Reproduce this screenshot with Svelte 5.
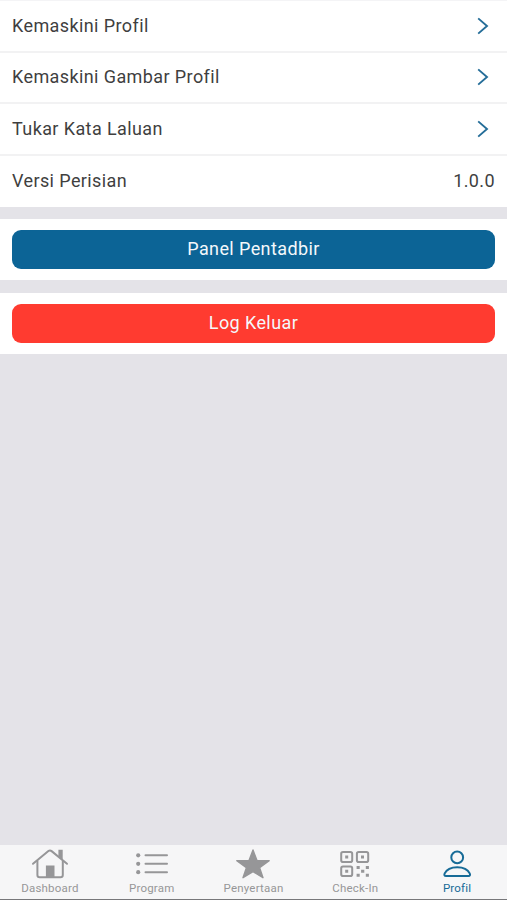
<script lang="ts">
  const links = ['Kemaskini Profil', 'Kemaskini Gambar Profil', 'Tukar Kata Laluan'];
  const version = '1.0.0';

  const tabs = [
    { id: 'home', label: 'Dashboard' },
    { id: 'list', label: 'Program' },
    { id: 'star', label: 'Penyertaan' },
    { id: 'qr', label: 'Check-In' },
    { id: 'person', label: 'Profil' }
  ];

  let active = $state('person');
</script>

<div class="screen">
  <main>
    <ul class="menu">
      {#each links as link}
        <li class="row">
          <span>{link}</span>
          <svg class="chevron" width="14" height="20" viewBox="0 0 14 20">
            <path d="M2.2 2.4 L11 10 L2.2 17.6" />
          </svg>
        </li>
      {/each}
      <li class="row">
        <span>Versi Perisian</span>
        <span>{version}</span>
      </li>
    </ul>

    <section class="panel">
      <button class="btn primary">Panel Pentadbir</button>
    </section>
    <section class="panel logout">
      <button class="btn danger">Log Keluar</button>
    </section>
  </main>

  <nav>
    {#each tabs as tab}
      <button class="tab" class:active={active === tab.id} onclick={() => (active = tab.id)}>
        <svg width="38" height="34" viewBox="0 0 38 34">
          {#if tab.id === 'home'}
            <path class="line" d="M2 16.8 L17.4 4.1 Q19 2.8 20.6 4.1 L36 16.8" />
            <path class="line" d="M6.4 14 V28 Q6.4 30.3 8.7 30.3 H29.5 Q31.8 30.3 31.8 28 V14" />
            <path class="fill" d="M27.4 2.8 H31.7 V13 L27.4 9.2 Z M14.9 18.6 H23.5 V30 H14.9 Z" />
          {:else if tab.id === 'list'}
            <path class="line" d="M12.5 8.3 H34 M12.5 16.8 H34 M12.5 25.2 H34" />
            <circle class="fill" cx="5.2" cy="8.3" r="2.1" />
            <circle class="fill" cx="5.2" cy="16.8" r="2.1" />
            <circle class="fill" cx="5.2" cy="25.2" r="2.1" />
          {:else if tab.id === 'star'}
            <path
              class="fill star"
              d="M19 3 L23 13.6 L35.2 13.6 L25.6 20.7 L29 30.7 L19 24.6 L9 30.7 L12.4 20.7 L2.8 13.6 L15 13.6 Z"
            />
          {:else if tab.id === 'qr'}
            <rect class="line" x="5.2" y="5" width="11" height="10" rx="1.8" />
            <rect class="line" x="20.9" y="5" width="11.3" height="10" rx="1.8" />
            <rect class="line" x="5.2" y="19.6" width="11" height="9.4" rx="1.8" />
            <path
              class="fill"
              d="M9.2 8.5h3v3h-3z M25 8.5h3v3h-3z M9.2 22.8h3v3h-3z M20.6 19h3.1v3h-3.1z M29.8 19h3.1v3h-3.1z M25.1 22.8h3.2v3h-3.2z M20.6 26.8h3.1v3h-3.1z M29.8 26.8h3.1v3h-3.1z"
            />
          {:else}
            <circle class="line" cx="19.2" cy="10.4" r="5.9" />
            <path class="line" d="M8 29 H30.4 Q32.8 29 31.7 26.4 C29.7 22.2 25.2 20.2 19.2 20.2 C13.2 20.2 8.7 22.2 6.7 26.4 Q5.6 29 8 29 Z" />
          {/if}
        </svg>
        <span>{tab.label}</span>
      </button>
    {/each}
  </nav>
</div>

<style>
  :global(body) {
    margin: 0;
  }
  .screen {
    height: 900px;
    display: flex;
    flex-direction: column;
    box-sizing: border-box;
    overflow: hidden;
    border-bottom: 1px solid #77777a;
    background: #e4e3e8;
    color: #3f3f3f;
    font-family: Roboto, sans-serif;
  }
  main {
    flex: 1;
  }
  .menu {
    list-style: none;
    margin: 0;
    padding: 0;
    background: #fff;
    border-top: 1px solid #f4f4f6;
  }
  .row {
    display: flex;
    align-items: center;
    justify-content: space-between;
    box-sizing: border-box;
    height: 51.5px;
    padding: 0 12px;
    border-bottom: 2px solid #f2f2f3;
    font-size: 18px;
    letter-spacing: 0.4px;
  }
  .row span {
    padding-bottom: 1px;
  }
  .row:last-child {
    border-bottom: 0;
  }
  .chevron {
    margin-right: 5px;
    fill: none;
    stroke: #246d98;
    stroke-width: 1.9;
  }
  .panel {
    height: 39px;
    margin-top: 11.5px;
    padding: 11px 12px 11.5px;
    background: #fff;
  }
  .logout {
    margin-top: 12.5px;
    padding: 11px 12px;
  }
  .btn {
    display: block;
    width: 100%;
    height: 39px;
    border: 0;
    border-radius: 9px;
    padding: 0 0 2px;
    color: #f4f8fb;
    font: 18px Roboto, sans-serif;
    letter-spacing: 0.4px;
  }
  .primary {
    background: #0c6496;
  }
  .danger {
    background: #ff3b30;
  }
  nav {
    display: flex;
    height: 54px;
    margin: 0 -1px;
    background: #f6f6f7;
  }
  .tab {
    flex: 1;
    display: flex;
    flex-direction: column;
    align-items: center;
    border: 0;
    padding: 2px 0 0;
    background: none;
    color: #969698;
    font: 11.5px Roboto, sans-serif;
    letter-spacing: 0.2px;
  }
  .tab span {
    line-height: 14px;
  }
  .tab.active {
    color: #176b97;
  }
  .line {
    fill: none;
    stroke: currentColor;
    stroke-width: 2;
    stroke-linecap: round;
    stroke-linejoin: round;
  }
  .fill {
    fill: currentColor;
  }
  .star {
    stroke: currentColor;
    stroke-width: 1.4;
    stroke-linejoin: round;
  }
</style>
